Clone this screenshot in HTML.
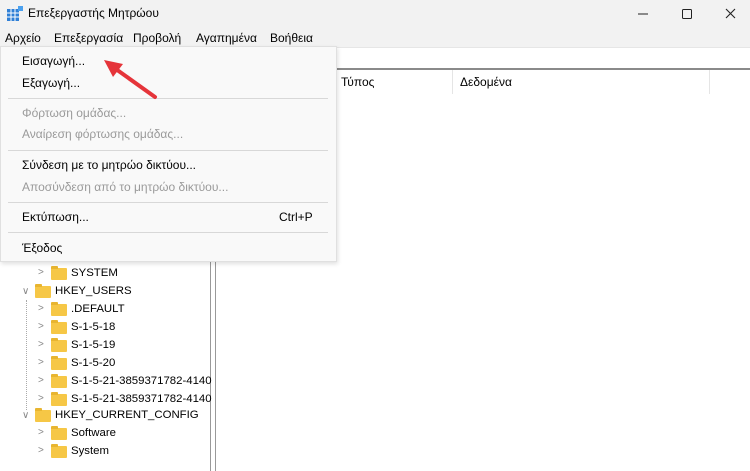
<!DOCTYPE html>
<html><head><meta charset="utf-8"><style>
*{margin:0;padding:0;box-sizing:border-box}
body{width:750px;height:471px;overflow:hidden;background:#fff;font-family:"Segoe UI","Liberation Sans","DejaVu Sans",sans-serif;font-size:12px;color:#000;position:relative}
.abs{position:absolute;white-space:nowrap}
.title{left:0;top:0;width:750px;height:28px;background:#f2f2f2}
.menubar{left:0;top:28px;width:750px;height:19px;background:#f2f2f2}
.addr{left:0;top:47px;width:750px;height:21px;background:#fff;border-top:1px solid #e6e6e6}
.hline{left:216px;top:68px;width:534px;height:2px;background:#8a8a8a}
.menu{left:0;top:46px;width:337px;height:216px;background:#f9f9f9;border:1px solid #e0e0e0;box-shadow:1px 2px 4px rgba(0,0,0,.12)}
.sep{left:8px;width:320px;height:1px;background:#d8d8d8}
.dis{color:#9a9a9a}
.folder{width:16px;height:12px;background:#f6c746;border-radius:1px}
.folder:before{content:"";position:absolute;left:0;top:-2px;width:7px;height:3px;background:#e8b530;border-radius:1px 1px 0 0}
.chev{color:#888;font-size:10px}
.t{font-size:11.4px}
</style></head><body>
<div class="abs title"></div>
<svg class="abs" style="left:7px;top:6px" width="16" height="16" viewBox="0 0 16 16"><rect x="0" y="3" width="12" height="12" fill="#2f7fd6"/><g stroke="#fff" stroke-width="1"><line x1="4" y1="3" x2="4" y2="15"/><line x1="8" y1="3" x2="8" y2="15"/><line x1="0" y1="7" x2="12" y2="7"/><line x1="0" y1="11" x2="12" y2="11"/></g><rect x="11" y="0" width="5" height="5" fill="#4aa0ee"/></svg>
<div class="abs" style="left:28px;top:6px;font-size:12px">Επεξεργαστής Μητρώου</div>
<svg class="abs" style="left:630px;top:6px" width="110" height="16"><line x1="8" y1="8" x2="18" y2="8" stroke="#222" stroke-width="1"/><rect x="52.5" y="3.5" width="9" height="9" rx="1" fill="none" stroke="#222"/><path d="M96 3 L105 12 M105 3 L96 12" stroke="#222" stroke-width="1.1"/></svg>
<div class="abs menubar"></div>
<div class="abs" style="left:5px;top:31px">Αρχείο</div>
<div class="abs" style="left:54px;top:31px">Επεξεργασία</div>
<div class="abs" style="left:133px;top:31px">Προβολή</div>
<div class="abs" style="left:196px;top:31px">Αγαπημένα</div>
<div class="abs" style="left:270px;top:31px">Βοήθεια</div>
<div class="abs addr"></div>
<div class="abs hline"></div>
<div class="abs" style="left:341px;top:75px">Τύπος</div>
<div class="abs" style="left:452px;top:70px;width:1px;height:24px;background:#e5e5e5"></div>
<div class="abs" style="left:460px;top:75px">Δεδομένα</div>
<div class="abs" style="left:709px;top:70px;width:1px;height:24px;background:#e5e5e5"></div>
<div class="abs" style="left:210px;top:46px;width:1px;height:425px;background:#999"></div>
<div class="abs" style="left:215px;top:46px;width:1px;height:425px;background:#999"></div>
<div class="abs" style="left:26px;top:300px;width:1px;height:110px;border-left:1px dotted #aaa"></div>
<div class="abs chev" style="left:38px;top:267px">&gt;</div><div class="abs folder" style="left:51px;top:268px"></div><div class="abs t" style="left:71px;top:267px">SYSTEM</div>
<div class="abs chev" style="left:22px;top:286px">&#8744;</div><div class="abs folder" style="left:35px;top:286px"></div><div class="abs t" style="left:55px;top:285px">HKEY_USERS</div>
<div class="abs chev" style="left:38px;top:303px">&gt;</div><div class="abs folder" style="left:51px;top:304px"></div><div class="abs t" style="left:71px;top:303px">.DEFAULT</div>
<div class="abs chev" style="left:38px;top:321px">&gt;</div><div class="abs folder" style="left:51px;top:322px"></div><div class="abs t" style="left:71px;top:321px">S-1-5-18</div>
<div class="abs chev" style="left:38px;top:339px">&gt;</div><div class="abs folder" style="left:51px;top:340px"></div><div class="abs t" style="left:71px;top:339px">S-1-5-19</div>
<div class="abs chev" style="left:38px;top:357px">&gt;</div><div class="abs folder" style="left:51px;top:358px"></div><div class="abs t" style="left:71px;top:357px">S-1-5-20</div>
<div class="abs chev" style="left:38px;top:375px">&gt;</div><div class="abs folder" style="left:51px;top:376px"></div><div class="abs t" style="left:71px;top:375px">S-1-5-21-3859371782-4140</div>
<div class="abs chev" style="left:38px;top:393px">&gt;</div><div class="abs folder" style="left:51px;top:394px"></div><div class="abs t" style="left:71px;top:393px">S-1-5-21-3859371782-4140</div>
<div class="abs chev" style="left:22px;top:410px">&#8744;</div><div class="abs folder" style="left:35px;top:410px"></div><div class="abs t" style="left:55px;top:409px">HKEY_CURRENT_CONFIG</div>
<div class="abs chev" style="left:38px;top:427px">&gt;</div><div class="abs folder" style="left:51px;top:428px"></div><div class="abs t" style="left:71px;top:427px">Software</div>
<div class="abs chev" style="left:38px;top:445px">&gt;</div><div class="abs folder" style="left:51px;top:446px"></div><div class="abs t" style="left:71px;top:445px">System</div>
<div class="abs menu"></div>
<div class="abs" style="left:22px;top:54px">Εισαγωγή...</div>
<div class="abs" style="left:22px;top:76px">Εξαγωγή...</div>
<div class="abs sep" style="top:98px"></div>
<div class="abs dis" style="left:22px;top:106px">Φόρτωση ομάδας...</div>
<div class="abs dis" style="left:22px;top:127px">Αναίρεση φόρτωσης ομάδας...</div>
<div class="abs sep" style="top:150px"></div>
<div class="abs" style="left:22px;top:158px">Σύνδεση με το μητρώο δικτύου...</div>
<div class="abs dis" style="left:22px;top:180px">Αποσύνδεση από το μητρώο δικτύου...</div>
<div class="abs sep" style="top:202px"></div>
<div class="abs" style="left:22px;top:210px">Εκτύπωση...</div>
<div class="abs" style="left:279px;top:210px">Ctrl+P</div>
<div class="abs sep" style="top:232px"></div>
<div class="abs" style="left:22px;top:241px">Έξοδος</div>
<svg class="abs" style="left:95px;top:55px" width="70" height="50"><line x1="60" y1="42" x2="18" y2="12" stroke="#e5343a" stroke-width="4" stroke-linecap="round"/><polygon points="9,5 28,9 18,22" fill="#e5343a"/></svg>
</body></html>
